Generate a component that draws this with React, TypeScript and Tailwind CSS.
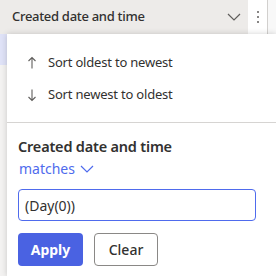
const font = { fontFamily: '"Noto Sans", "Open Sans", sans-serif' };

function ThinArrow({ down }: { down?: boolean }) {
  return (
    <svg width="10" height="14" viewBox="0 0 10 14" className="text-[#605e5c]">
      {down ? (
        <path d="M5 1.5V12.5M1.5 9L5 12.5L8.5 9" fill="none" stroke="currentColor" strokeWidth="1.1" />
      ) : (
        <path d="M5 12.5V1.5M1.5 5L5 1.5L8.5 5" fill="none" stroke="currentColor" strokeWidth="1.1" />
      )}
    </svg>
  );
}

function Chevron({ className }: { className?: string }) {
  return (
    <svg width="14" height="8" viewBox="0 0 14 8" className={className}>
      <path d="M1 1L7 7L13 1" fill="none" stroke="currentColor" strokeWidth="1.2" />
    </svg>
  );
}

export default function App() {
  return (
    <div
      className="w-[276px] h-[276px] overflow-hidden bg-[#f3f2f1] flex flex-col text-[#323130]"
      style={font}
    >
      {/* Column header */}
      <div className="flex h-[34px] shrink-0">
        <div className="flex-1 flex items-center bg-[#edebe9] pl-3 pr-[7px]">
          <span className="flex-1 text-[13px] font-medium tracking-[-0.3px]">
            Created date and time
          </span>
          <Chevron className="text-[#605e5c]" />
        </div>
        <div className="w-[20px] bg-white border-r border-[#d2d0ce] flex flex-col items-center justify-center gap-[3px]">
          <span className="w-[2px] h-[2px] rounded-full bg-[#605e5c]" />
          <span className="w-[2px] h-[2px] rounded-full bg-[#605e5c]" />
          <span className="w-[2px] h-[2px] rounded-full bg-[#605e5c]" />
        </div>
        <div className="w-[8px] bg-[#f8f8f8]" />
      </div>

      <div className="flex flex-1">
        {/* grid edge behind the menu */}
        <div className="w-[7px] flex flex-col">
          <div className="h-[31px] bg-[#dfe2f7]" />
          <div className="flex-1 bg-[#f3f2f1]" />
        </div>

        {/* Filter menu */}
        <div className="flex-1 bg-white shadow-[0_0_6px_rgba(0,0,0,0.18)] flex flex-col">
          <div className="pt-[13px] pb-[11px]">
            <div className="h-[32px] flex items-center pl-[20px] gap-[11px] text-[13px] tracking-[-0.2px]">
              <ThinArrow />
              <span>Sort oldest to newest</span>
            </div>
            <div className="h-[32px] flex items-center pl-[20px] gap-[11px] text-[13px] tracking-[-0.2px]">
              <ThinArrow down />
              <span>Sort newest to oldest</span>
            </div>
          </div>
          <div className="h-px bg-[#d6d4d2]" />

          <div className="pl-[11px] pt-[12px] flex flex-col">
            <div className="text-[14.5px] font-semibold leading-[22px] tracking-[-0.2px]">
              Created date and time
            </div>
            <div className="flex items-center gap-[5px] text-[14px] leading-[22px] text-[#4f6bed] mt-[1px] pl-[1px]">
              <span>matches</span>
              <Chevron />
            </div>
            <div className="mt-[9px] w-[238px] h-[32px] border border-[#4f6bed] rounded-[4px] flex items-center px-[6px] text-[14px]">
              (Day(0))
            </div>
            <div className="flex gap-[11px] mt-[12px]">
              <button className="w-[65px] h-[33px] rounded-[4px] bg-[#4a62e2] text-white text-[14px] font-bold">
                Apply
              </button>
              <button className="w-[64px] h-[33px] rounded-[4px] bg-white border border-[#8a8886] text-[14px] font-medium">
                Clear
              </button>
            </div>
          </div>
        </div>
      </div>
    </div>
  );
}
